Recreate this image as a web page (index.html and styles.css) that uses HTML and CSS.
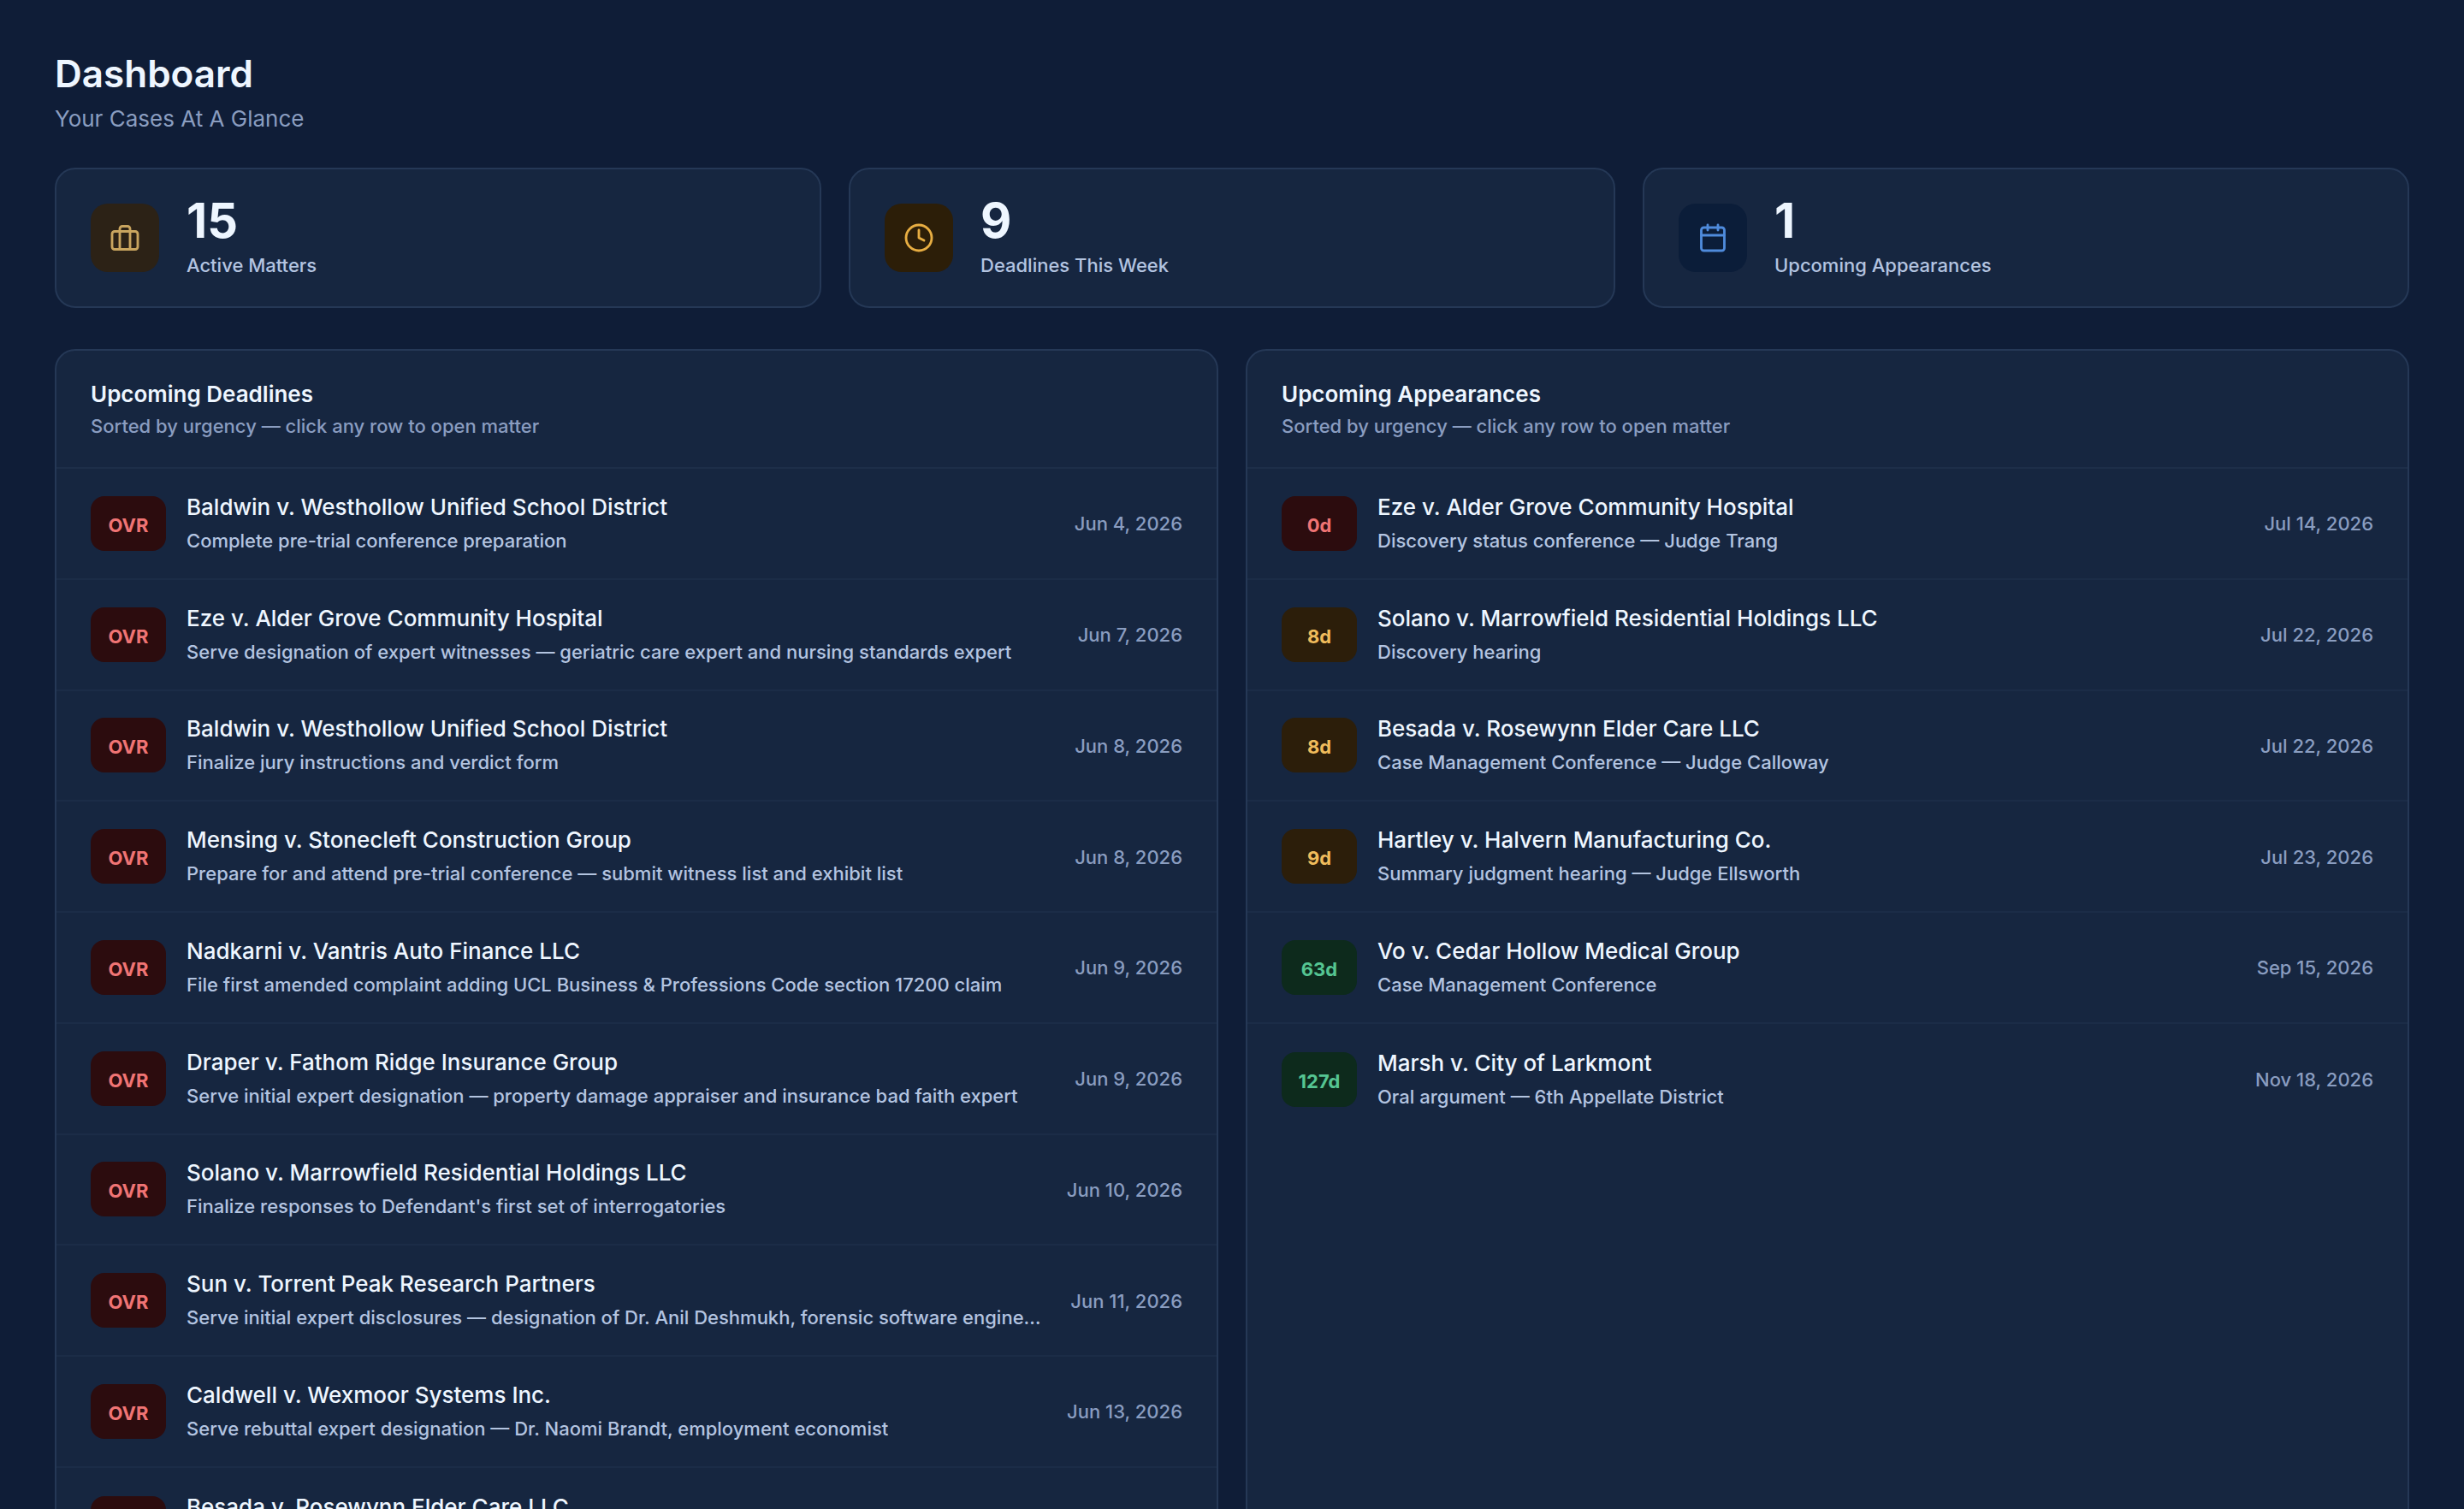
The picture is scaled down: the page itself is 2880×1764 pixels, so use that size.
FILE: index.html
```
<!DOCTYPE html>
<html lang="en">
<head>
  <meta charset="UTF-8">
  <meta name="viewport" content="width=device-width, initial-scale=1.0">
  <title>Dashboard</title>
  <link rel="stylesheet" href="styles.css">
</head>
<body>
  <main class="dashboard">
    <header class="page-header">
      <h1>Dashboard</h1>
      <p>Your Cases At A Glance</p>
    </header>

    <!-- Stats -->
    <section class="stats">
      <div class="stat-card">
        <div class="stat-icon gold">
          <svg viewBox="0 0 24 24"><rect x="2" y="7" width="20" height="14" rx="2"/><path d="M16 21V5a2 2 0 0 0-2-2h-4a2 2 0 0 0-2 2v16"/></svg>
        </div>
        <div>
          <div class="stat-value">15</div>
          <div class="stat-label">Active Matters</div>
        </div>
      </div>
      <div class="stat-card">
        <div class="stat-icon amber">
          <svg viewBox="0 0 24 24"><circle cx="12" cy="12" r="10"/><path d="M12 6v6l4 2"/></svg>
        </div>
        <div>
          <div class="stat-value">9</div>
          <div class="stat-label">Deadlines This Week</div>
        </div>
      </div>
      <div class="stat-card">
        <div class="stat-icon blue">
          <svg viewBox="0 0 24 24"><rect x="3" y="4" width="18" height="18" rx="2"/><path d="M16 2v4M8 2v4M3 10h18"/></svg>
        </div>
        <div>
          <div class="stat-value">1</div>
          <div class="stat-label">Upcoming Appearances</div>
        </div>
      </div>
    </section>

    <section class="panels">
      <!-- Deadlines -->
      <div class="panel">
        <div class="panel-header">
          <h2>Upcoming Deadlines</h2>
          <p>Sorted by urgency — click any row to open matter</p>
        </div>
        <div class="row">
          <span class="badge red">OVR</span>
          <div class="row-text">
            <div class="matter">Baldwin v. Westhollow Unified School District</div>
            <div class="detail">Complete pre-trial conference preparation</div>
          </div>
          <span class="date">Jun 4, 2026</span>
        </div>
        <div class="row">
          <span class="badge red">OVR</span>
          <div class="row-text">
            <div class="matter">Eze v. Alder Grove Community Hospital</div>
            <div class="detail">Serve designation of expert witnesses — geriatric care expert and nursing standards expert</div>
          </div>
          <span class="date">Jun 7, 2026</span>
        </div>
        <div class="row">
          <span class="badge red">OVR</span>
          <div class="row-text">
            <div class="matter">Baldwin v. Westhollow Unified School District</div>
            <div class="detail">Finalize jury instructions and verdict form</div>
          </div>
          <span class="date">Jun 8, 2026</span>
        </div>
        <div class="row">
          <span class="badge red">OVR</span>
          <div class="row-text">
            <div class="matter">Mensing v. Stonecleft Construction Group</div>
            <div class="detail">Prepare for and attend pre-trial conference — submit witness list and exhibit list</div>
          </div>
          <span class="date">Jun 8, 2026</span>
        </div>
        <div class="row">
          <span class="badge red">OVR</span>
          <div class="row-text">
            <div class="matter">Nadkarni v. Vantris Auto Finance LLC</div>
            <div class="detail">File first amended complaint adding UCL Business &amp; Professions Code section 17200 claim</div>
          </div>
          <span class="date">Jun 9, 2026</span>
        </div>
        <div class="row">
          <span class="badge red">OVR</span>
          <div class="row-text">
            <div class="matter">Draper v. Fathom Ridge Insurance Group</div>
            <div class="detail">Serve initial expert designation — property damage appraiser and insurance bad faith expert</div>
          </div>
          <span class="date">Jun 9, 2026</span>
        </div>
        <div class="row">
          <span class="badge red">OVR</span>
          <div class="row-text">
            <div class="matter">Solano v. Marrowfield Residential Holdings LLC</div>
            <div class="detail">Finalize responses to Defendant's first set of interrogatories</div>
          </div>
          <span class="date">Jun 10, 2026</span>
        </div>
        <div class="row">
          <span class="badge red">OVR</span>
          <div class="row-text">
            <div class="matter">Sun v. Torrent Peak Research Partners</div>
            <div class="detail">Serve initial expert disclosures — designation of Dr. Anil Deshmukh, forensic software engineering expert</div>
          </div>
          <span class="date">Jun 11, 2026</span>
        </div>
        <div class="row">
          <span class="badge red">OVR</span>
          <div class="row-text">
            <div class="matter">Caldwell v. Wexmoor Systems Inc.</div>
            <div class="detail">Serve rebuttal expert designation — Dr. Naomi Brandt, employment economist</div>
          </div>
          <span class="date">Jun 13, 2026</span>
        </div>
        <div class="row">
          <span class="badge red">OVR</span>
          <div class="row-text">
            <div class="matter">Besada v. Rosewynn Elder Care LLC</div>
            <div class="detail">&nbsp;</div>
          </div>
        </div>
      </div>

      <!-- Appearances -->
      <div class="panel">
        <div class="panel-header">
          <h2>Upcoming Appearances</h2>
          <p>Sorted by urgency — click any row to open matter</p>
        </div>
        <div class="row">
          <span class="badge red">0d</span>
          <div class="row-text">
            <div class="matter">Eze v. Alder Grove Community Hospital</div>
            <div class="detail">Discovery status conference — Judge Trang</div>
          </div>
          <span class="date">Jul 14, 2026</span>
        </div>
        <div class="row">
          <span class="badge amber">8d</span>
          <div class="row-text">
            <div class="matter">Solano v. Marrowfield Residential Holdings LLC</div>
            <div class="detail">Discovery hearing</div>
          </div>
          <span class="date">Jul 22, 2026</span>
        </div>
        <div class="row">
          <span class="badge amber">8d</span>
          <div class="row-text">
            <div class="matter">Besada v. Rosewynn Elder Care LLC</div>
            <div class="detail">Case Management Conference — Judge Calloway</div>
          </div>
          <span class="date">Jul 22, 2026</span>
        </div>
        <div class="row">
          <span class="badge amber">9d</span>
          <div class="row-text">
            <div class="matter">Hartley v. Halvern Manufacturing Co.</div>
            <div class="detail">Summary judgment hearing — Judge Ellsworth</div>
          </div>
          <span class="date">Jul 23, 2026</span>
        </div>
        <div class="row">
          <span class="badge green">63d</span>
          <div class="row-text">
            <div class="matter">Vo v. Cedar Hollow Medical Group</div>
            <div class="detail">Case Management Conference</div>
          </div>
          <span class="date">Sep 15, 2026</span>
        </div>
        <div class="row">
          <span class="badge green">127d</span>
          <div class="row-text">
            <div class="matter">Marsh v. City of Larkmont</div>
            <div class="detail">Oral argument — 6th Appellate District</div>
          </div>
          <span class="date">Nov 18, 2026</span>
        </div>
      </div>
    </section>
  </main>
</body>
</html>
```
FILE: styles.css
```
* {
  box-sizing: border-box;
  margin: 0;
  padding: 0;
}
body {
  height: 100vh;
  overflow: hidden;
  background-color: #0f1d37;
  color: #eef6ff;
  font-family: Inter, sans-serif;
  font-size: 22px;
  font-weight: 500;
  line-height: 33px;
}
.dashboard {
  padding: 56px 64px 0;
}

/* Header */
.page-header {
  margin-bottom: 37px;
}
.page-header h1 {
  font-size: 44px;
  font-weight: 600;
  line-height: 60px;
}
.page-header p {
  margin-top: 3px;
  font-size: 26px;
  font-weight: 400;
  line-height: 40px;
  color: #8a9dc0;
}

/* Stat cards */
.stats {
  display: grid;
  grid-template-columns: repeat(3, 1fr);
  gap: 32px;
  margin-bottom: 48px;
}
.stat-card {
  display: flex;
  align-items: center;
  gap: 32px;
  height: 164px;
  padding: 0 40px;
  background-color: #162640;
  border: 2px solid #253856;
  border-radius: 24px;
}
.stat-icon {
  display: flex;
  align-items: center;
  justify-content: center;
  width: 80px;
  height: 80px;
  border-radius: 20px;
}
.stat-icon svg {
  width: 36px;
  height: 36px;
  fill: none;
  stroke: currentColor;
  stroke-width: 1.9;
  stroke-linecap: round;
  stroke-linejoin: round;
}
.stat-icon.gold {
  background-color: #2c2216;
  color: #c9a55f;
}
.stat-icon.amber {
  background-color: #2c1e08;
  color: #e8ae42;
}
.stat-icon.blue {
  background-color: #0b1d39;
  color: #4f8bdc;
}
.stat-value {
  font-size: 56px;
  font-weight: 700;
  line-height: 56px;
}
.stat-label {
  margin-top: 8px;
  color: #b3c4e0;
}

/* Panels */
.panels {
  display: grid;
  grid-template-columns: repeat(2, 1fr);
  gap: 32px;
}
.panel {
  min-width: 0;
  background-color: #162640;
  border: 2px solid #253856;
  border-radius: 24px;
  overflow: hidden;
}
.panel-header {
  padding: 32px 40px 31px;
  border-bottom: 2px solid #1d2e49;
}
.panel-header h2 {
  font-size: 26px;
  font-weight: 600;
  line-height: 38px;
}
.panel-header p {
  margin-top: 2px;
  color: #8a9dc0;
}

/* Rows */
.row {
  display: flex;
  align-items: center;
  gap: 24px;
  height: 129.75px;
  padding: 0 40px;
  border-bottom: 2px solid #1b2c47;
}
.row:last-child {
  border-bottom: none;
}
.badge {
  flex-shrink: 0;
  width: 88px;
  height: 64px;
  padding-top: 2px;
  border-radius: 16px;
  font-weight: 700;
  line-height: 64px;
  text-align: center;
}
.badge.red {
  background-color: #2c0c0e;
  color: #f07474;
}
.badge.amber {
  background-color: #2c1e0a;
  color: #f0bc5c;
}
.badge.green {
  background-color: #0d2a1c;
  color: #55c592;
}
.row-text {
  flex: 1;
  min-width: 0;
}
.matter {
  font-size: 26px;
  line-height: 35px;
}
.detail {
  margin-top: 6px;
  overflow: hidden;
  white-space: nowrap;
  text-overflow: ellipsis;
  color: #b3c4e0;
}
.date {
  flex-shrink: 0;
  margin-top: 2px;
  color: #8a9dc0;
}
```
